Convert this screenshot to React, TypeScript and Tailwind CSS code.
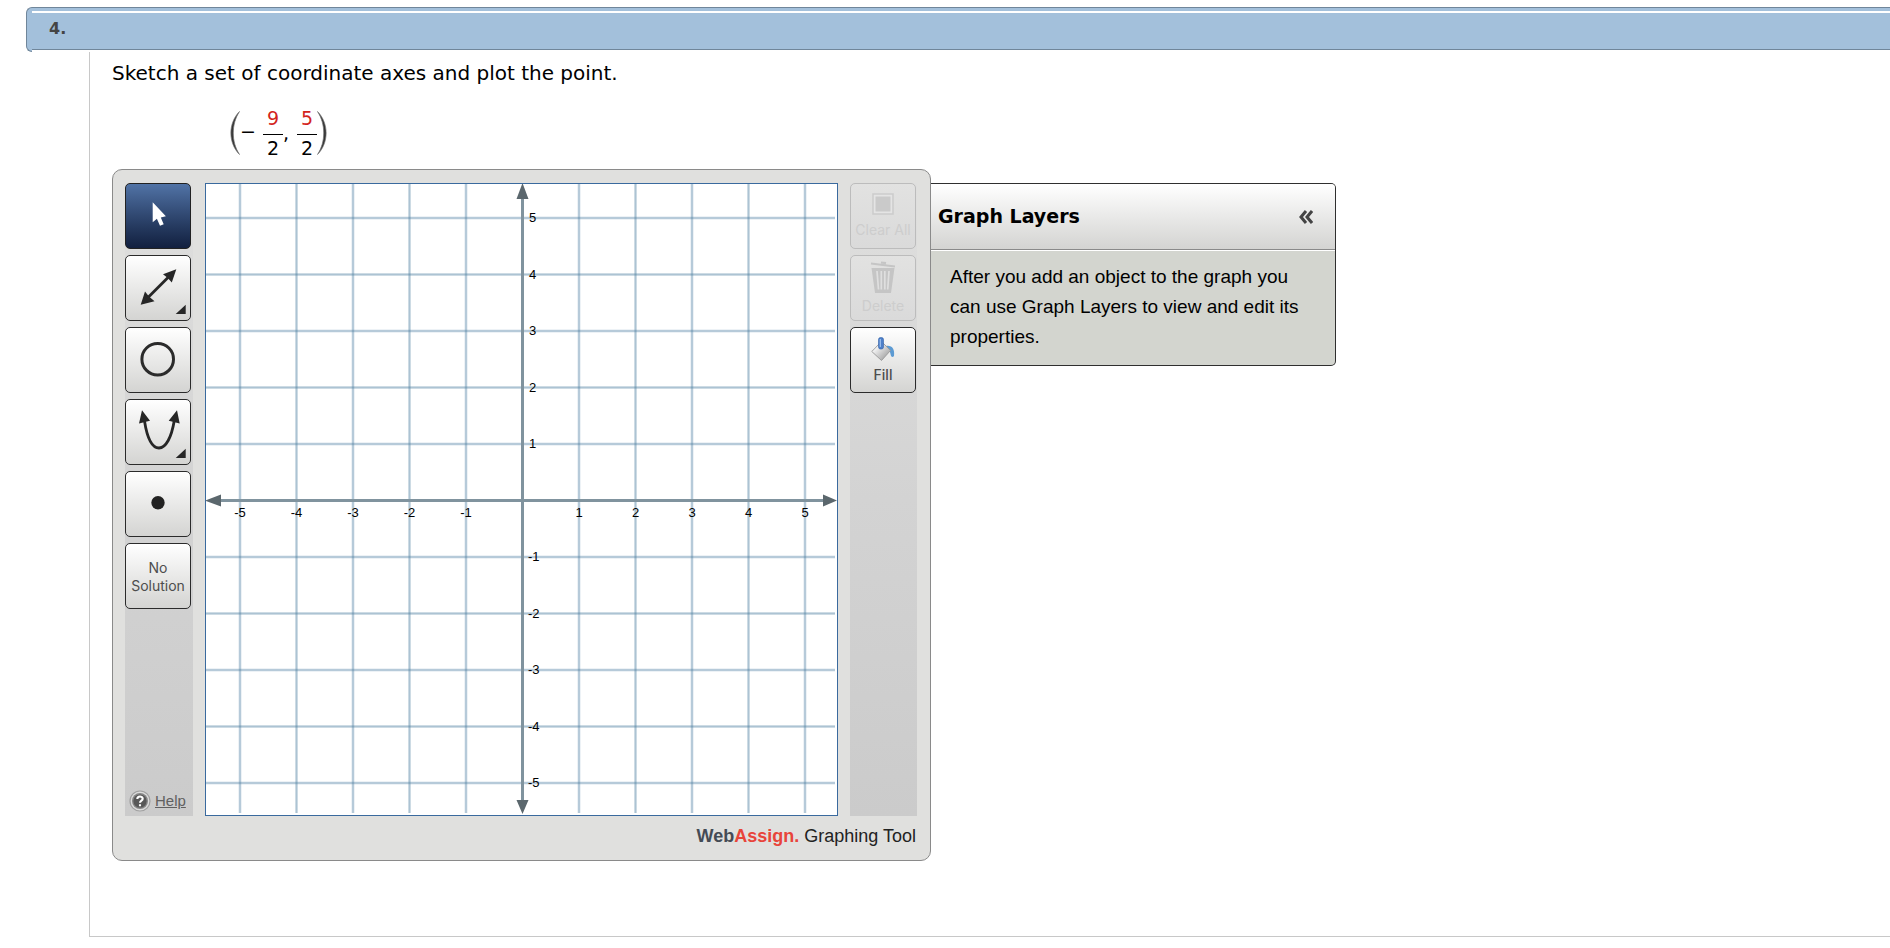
import type { ReactNode } from "react";

const verdana = "font-['Verdana','DejaVu_Sans',sans-serif]";
const arial = "font-['Liberation_Sans',Arial,sans-serif]";

const UNIT = 56.5;
const CENTER = 317.5;
const ticks = [-5, -4, -3, -2, -1, 1, 2, 3, 4, 5];

function Fraction({ top, bottom }: { top: string; bottom: string }) {
  return (
    <span className="flex w-5 flex-col items-center leading-[26px]">
      <span className="w-full border-b border-black pb-[3px] text-center text-[#d3241c]">{top}</span>
      <span>{bottom}</span>
    </span>
  );
}

function Paren({ flip = false }: { flip?: boolean }) {
  return (
    <svg width="10" height="44" viewBox="0 0 10 44" aria-hidden="true">
      <path
        d={flip ? "M0.5 0.5C12 12 12 32 0.5 43.5C8.8 31 8.8 13 0.5 0.5Z" : "M9.5 0.5C-2 12 -2 32 9.5 43.5C1.2 31 1.2 13 9.5 0.5Z"}
        fill="#333"
        stroke="#777"
        strokeWidth="0.7"
      />
    </svg>
  );
}

function ToolButton({ label, active = false, disabled = false, children }: { label: string; active?: boolean; disabled?: boolean; children: ReactNode }) {
  const look = active
    ? "border-[#222] bg-linear-to-b from-[#5173a6] to-[#12203f]"
    : disabled
      ? "border-[#bcbcbc] bg-linear-to-b from-[#e2e2e1] to-[#dadada]"
      : "border-[#2b2b2b] bg-linear-to-b from-white to-[#d4d4d2]";
  return (
    <button type="button" aria-label={label} disabled={disabled} className={`flex size-[66px] flex-col items-center justify-center rounded-[5px] border ${look}`}>
      {children}
    </button>
  );
}

function Icon({ children }: { children: ReactNode }) {
  return (
    <svg width="64" height="64" viewBox="1 1 64 64" aria-hidden="true">
      {children}
    </svg>
  );
}

function Graph() {
  return (
    <div className="size-[633px] border border-[#3a6a9e] bg-white">
      <svg width="631" height="631" viewBox="1 1 631 631" role="img" aria-label="Coordinate plane">
        <g fill="#4a7d9f">
          {ticks.map((t) => (
            <g key={t}>
              <rect x={CENTER + t * UNIT - 1.5} y="1" width="3" height="629" opacity="0.2" />
              <rect x={CENTER + t * UNIT - 0.8} y="1" width="1.6" height="629" opacity="0.32" />
              <rect y={CENTER + t * UNIT - 1.5} x="1" height="3" width="629" opacity="0.2" />
              <rect y={CENTER + t * UNIT - 0.8} x="1" height="1.6" width="629" opacity="0.32" />
            </g>
          ))}
        </g>
        <g stroke="#80939e" strokeWidth="3">
          <path d="M317.5 10V624M10 317.5H624" />
        </g>
        <g fill="#5b676d">
          <path d="M317.5 0L323.5 16H311.5ZM317.5 631L323.5 617H311.5ZM0 317.5L16 311.5V323.5ZM632 317.5L618 311.5V323.5Z" />
        </g>
        <g className={`${arial} text-[13px]`} fill="#000">
          {ticks.map((t) => (
            <g key={t}>
              <text x={CENTER + t * UNIT} y="334" textAnchor="middle">
                {t}
              </text>
              <text x={t < 0 ? 323 : 324} y={CENTER - t * UNIT + 4}>
                {t}
              </text>
            </g>
          ))}
        </g>
      </svg>
    </div>
  );
}

const columnShade = "bg-linear-to-b from-[#dfdfde] via-[#d3d3d3] to-[#cbcbcb]";
const toolText = "font-['Inter',sans-serif] text-[14px]";

export default function App() {
  return (
    <main className="bg-white pt-[7px] pb-2.5 text-black">
      <header className="ml-[26px] flex items-start">
        <div className="h-[45px] w-1.5 rounded-l-[6px] border-l border-t border-[#70869a] border-b bg-[#a3c0db]" />
        <div className="h-[43px] grow border-y border-[#70869a] bg-[#a3c0db] pt-[3px]">
          <div className="h-0.5 bg-white" />
          <h2 className={`${verdana} pt-1.5 pl-[17px] text-[16px] leading-5 font-bold text-[#444]`}>4.</h2>
        </div>
      </header>

      <section className="ml-[89px] border-b border-l border-[#c8c8c8] pt-[7px] pb-[75px] pl-[22px]">
        <p className={`${verdana} text-[20px] leading-7`}>Sketch a set of coordinate axes and plot the point.</p>

        <div className={`${verdana} mt-[18px] mb-2 flex items-center pl-[118px] text-[19px]`}>
          <Paren />
          <span className="pb-1">−</span>
          <span className="pl-[7px]">
            <Fraction top="9" bottom="2" />
          </span>
          <span className="w-3.5">,</span>
          <Fraction top="5" bottom="2" />
          <Paren flip />
        </div>

        <div className="flex items-start">
          <div className="rounded-[10px] border border-[#8a8a8a] bg-[#e0e0de] pt-[13px] pr-[13px] pl-3">
            <div className="flex gap-3">
              <div className={`flex w-[68px] flex-col gap-1.5 ${columnShade}`}>
                <ToolButton label="Select" active>
                  <Icon>
                    <path d="M27.7 19.3V39.3L31.9 35.8L35 42.8L38.7 41.2L35.8 34.5L40.9 33.3Z" fill="#fff" />
                  </Icon>
                </ToolButton>
                <ToolButton label="Line">
                  <Icon>
                    <path d="M20 45.5L47 18.5" stroke="#262626" strokeWidth="2.8" />
                    <path d="M51.3 14.3L38 19.2L42.5 22.8L46.8 27.5ZM15.7 49.7L20 36.5L24 41.5L29.5 46.3ZM60.7 49.7V59H50.7Z" fill="#262626" />
                  </Icon>
                </ToolButton>
                <ToolButton label="Circle">
                  <Icon>
                    <circle cx="32.7" cy="32.2" r="15.8" fill="none" stroke="#2b2b2b" strokeWidth="3" />
                  </Icon>
                </ToolButton>
                <ToolButton label="Parabola">
                  <Icon>
                    <path d="M19.5 22C22 38 27 49 34 49C41 49 46.5 38 49.2 22" fill="none" stroke="#262626" strokeWidth="2.8" />
                    <path d="M17 11.3L14 24.5L25 21.7ZM52 11.3L43.7 21.7L54.7 24.5ZM60.7 49.7V59H50.7Z" fill="#262626" />
                  </Icon>
                </ToolButton>
                <ToolButton label="Point">
                  <Icon>
                    <circle cx="33" cy="31.7" r="6.7" fill="#222" />
                  </Icon>
                </ToolButton>
                <ToolButton label="No Solution">
                  <span className={`${toolText} pt-px leading-[18px] text-[#4d4d4d]`}>
                    No
                    <br />
                    Solution
                  </span>
                </ToolButton>
                <a href="#help" className={`${arial} mt-auto flex items-center gap-1 pb-1 pl-1 text-[15px] leading-[22px] text-[#606060]`}>
                  <svg width="22" height="22" viewBox="0 0 22 22" aria-hidden="true">
                    <circle cx="11" cy="11" r="10" fill="#dcdcdc" stroke="#a0a0a0" strokeWidth="1.2" />
                    <circle cx="11" cy="11" r="8" fill="#858585" />
                    <circle cx="11" cy="11" r="6.6" fill="#585858" />
                    <path d="M8.3 9C8.3 5.7 13.7 5.7 13.7 8.8C13.7 10.8 11 10.6 11 12.8M11 14.3V16.3" fill="none" stroke="#fff" strokeWidth="2.1" />
                  </svg>
                  <span className="underline">Help</span>
                </a>
              </div>

              <Graph />

              <div className={`flex w-[67px] flex-col gap-1.5 ${columnShade}`}>
                <ToolButton label="Clear All" disabled>
                  <svg width="22" height="22" viewBox="0 0 22 22" aria-hidden="true">
                    <rect x="1" y="1" width="20" height="20" fill="#e4e4e4" stroke="#cbcbcb" strokeWidth="1.5" />
                    <rect x="3.5" y="3.5" width="15" height="15" fill="#cacaca" />
                  </svg>
                  <span className={`${toolText} pt-1.5 leading-[18px] whitespace-nowrap text-[#cdcdcd]`}>Clear All</span>
                </ToolButton>
                <ToolButton label="Delete" disabled>
                  <svg width="26" height="32" viewBox="0 0 26 32" aria-hidden="true">
                    <path d="M1 2.5L25 5.5M11 1.5L16 2.2" stroke="#c5c5c5" strokeWidth="2.2" />
                    <path d="M1.5 7H24.5L21 32H5Z" fill="#c5c5c5" />
                    <path d="M7 10L8.5 28.5M11.3 10V28.5M14.8 10V28.5M19 10L17.7 28.5" stroke="#dfdfdf" strokeWidth="1.7" />
                  </svg>
                  <span className={`${toolText} pt-1 leading-[18px] text-[#cdcdcd]`}>Delete</span>
                </ToolButton>
                <ToolButton label="Fill">
                  <svg width="24" height="25" viewBox="0 0 24 25" aria-hidden="true">
                    <defs>
                      <linearGradient id="bucket" x1="0" y1="0" x2="1" y2="1">
                        <stop offset="0.2" stopColor="#fff" />
                        <stop offset="1" stopColor="#8c8c8c" />
                      </linearGradient>
                    </defs>
                    <path d="M15 9C21 8 24 12 23 19C21.5 21 20 20 19.5 17C19 14 18 13 15 13Z" fill="#5d9bd3" />
                    <path d="M0.8 14.5L10.5 4.5L19.5 13.5L10.5 23.5Z" fill="url(#bucket)" stroke="#999" strokeWidth="0.9" />
                    <rect x="7.5" y="0.5" width="5" height="11.5" rx="2" fill="#4c7fc9" stroke="#2f5fa8" strokeWidth="0.6" />
                    <path d="M9.3 2V10" stroke="#9dc0ec" strokeWidth="1.2" />
                  </svg>
                  <span className={`${toolText} pt-1 leading-[18px] font-medium text-[#4d4d4d]`}>Fill</span>
                </ToolButton>
              </div>
            </div>

            <p className={`${arial} pt-2.5 pr-px pb-[13px] text-right text-[18px] leading-[21px] text-[#222]`}>
              <span className="font-bold text-[#444b55]">Web</span>
              <span className="font-bold text-[#e8443a]">Assign.</span> Graphing Tool
            </p>
          </div>

          <aside className="mt-3.5 w-[405px] overflow-hidden rounded-r-[5px] border border-l-0 border-[#2f2f2f] bg-[#d3d5cf]">
            <div className="flex h-[66px] items-center justify-between border-b border-[#8a8a8a] bg-linear-to-b from-white to-[#d4d4d2] pr-[22px] pl-[7px]">
              <h3 className={`${verdana} text-[19px] font-bold`}>Graph Layers</h3>
              <button type="button" aria-label="Collapse Graph Layers">
                <svg width="14" height="14" viewBox="0 0 14 14" aria-hidden="true">
                  <path d="M7 1L2 7L7 13M13 1L8 7L13 13" fill="none" stroke="#444" strokeWidth="3" />
                </svg>
              </button>
            </div>
            <p className={`${arial} border-t border-white px-[19px] pt-[11px] pb-[13px] text-[19px] leading-[30px]`}>
              After you add an object to the graph you can use Graph Layers to view and edit its properties.
            </p>
          </aside>
        </div>
      </section>
    </main>
  );
}
